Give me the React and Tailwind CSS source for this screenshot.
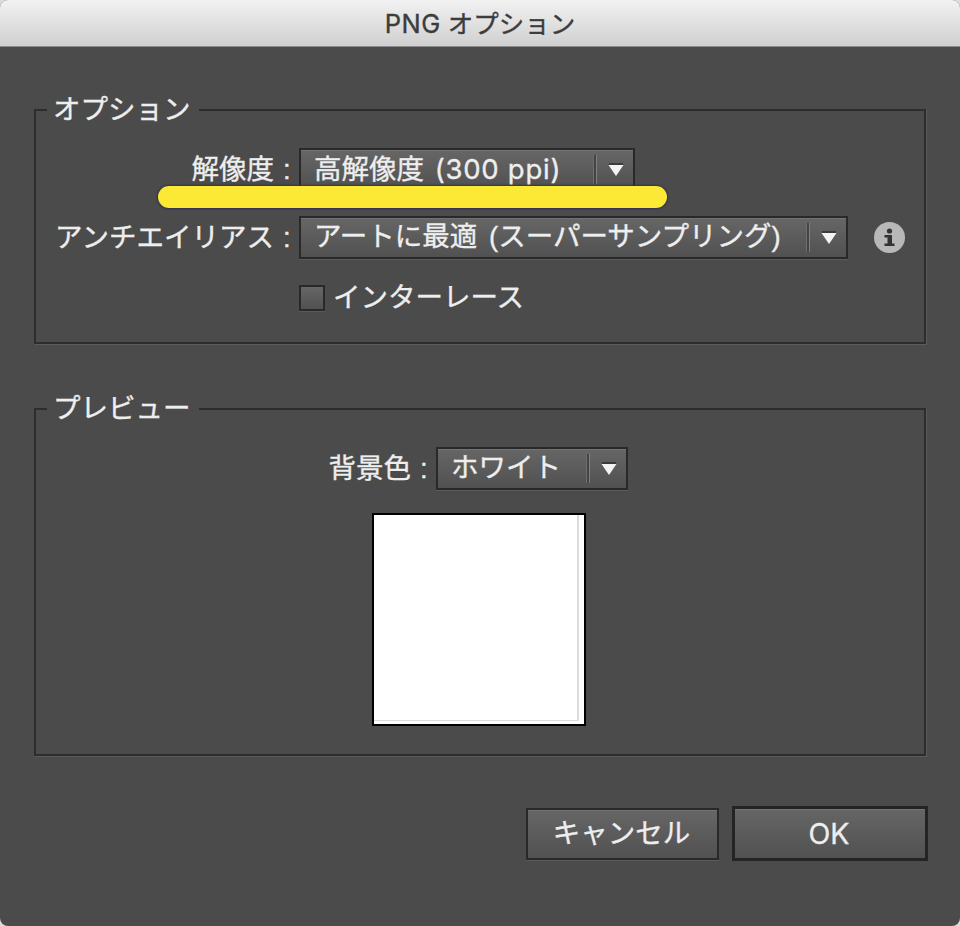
const controlFill = 'bg-linear-to-b from-[#666666] to-[#515151]'

function Group({ title, className, children }) {
  return (
    <fieldset
      className={`mx-[34px] min-w-0 border-2 border-[#2d2d2d] pl-[11px] shadow-[1px_1px_0_#5b5b5b] ${className}`}
    >
      <legend className="h-9 pr-[8px] pl-[6px] leading-9 whitespace-nowrap">{title}</legend>
      {children}
    </fieldset>
  )
}

function Label({ children, className }) {
  return (
    <div className={`flex shrink-0 justify-end whitespace-nowrap ${className}`}>
      <span>{children}</span>
      <span className="w-[25px] pl-[9px]">:</span>
    </div>
  )
}

function Select({ children, className }) {
  return (
    <button
      className={`flex h-[43px] shrink-0 items-center border-2 border-[#292929] pl-[13px] text-left whitespace-nowrap shadow-[0_1px_0_#5b5b5b,inset_0_1px_0_#737373] ${controlFill} ${className}`}
    >
      <span className="flex-1 pb-px leading-9">{children}</span>
      <span className="h-[29px] w-[4px] border-x border-l-[#6e6e6e] border-r-[#808080] bg-[#444444]" />
      <svg className="mr-[9px] ml-[11px] h-[13px] w-4" viewBox="0 0 16 13">
        <path d="M1 0h14v2H1z" fill="#3b3b3b" />
        <path d="M0.500 2h15L8 13z" fill="#f3f3f3" />
      </svg>
    </button>
  )
}

export default function App() {
  return (
    <div className="h-[926px] w-[960px] overflow-hidden bg-[#dcdcdc]">
      <main className="flex h-full flex-col overflow-hidden rounded-[8px] bg-[#4b4b4b] font-['Liberation_Sans','Noto_Sans_CJK_JP',sans-serif] text-[27.5px] text-[#eeeeee] [-webkit-text-stroke:0.35px_currentColor]">
        <header className="flex h-[47px] shrink-0 items-center justify-center border-b border-[#8a8a8a] bg-linear-to-b from-[#f2f2f2] to-[#d0d0d0] pt-[2px] text-[25.5px] text-[#3c3c3c]">
          <h1>
            <span className="font-['Inter'] tracking-[0.5px]">PNG</span> オプション
          </h1>
        </header>

        <Group title="オプション" className="mt-[45px] h-[252px]">
          <div className="relative mt-[20px] flex items-center">
            <Label className="w-[252px]">解像度</Label>
            <Select className="w-[336px]">
              高解像度 <span className="ml-[3px] font-['Inter'] tracking-[0.75px]">(300 ppi)</span>
            </Select>
            <div className="absolute top-[38px] left-[111px] h-[22px] w-[509px] rounded-full bg-[#fbe936] shadow-[0_0_2px_1px_#30304e]" />
          </div>
          <div className="mt-[25px] flex items-center">
            <Label className="w-[252px]">アンチエイリアス</Label>
            <Select className="w-[549px]">
              アートに最適 <span className="ml-[4px]">(スーパーサンプリング)</span>
            </Select>
            <svg className="ml-[26px] h-[31px] w-[31px]" viewBox="0 0 31 31">
              <circle cx="15.5" cy="15.5" r="15.5" fill="#b8b8b8" />
              <circle cx="15.5" cy="9" r="2.6" fill="#333" />
              <path d="M10.500 13h7.500v8.500h2.500v2.500H10.500v-2.500H13.500v-6H10.500z" fill="#333" />
            </svg>
          </div>
          <label className="mt-[21px] ml-[252px] flex items-center">
            <span
              className={`h-[26px] w-[26px] border-2 border-[#292929] shadow-[0_1px_0_#5b5b5b] ${controlFill}`}
            />
            <span className="ml-2 leading-9">インターレース</span>
          </label>
        </Group>

        <Group title="プレビュー" className="mt-[47px] h-[365px]">
          <div className="mt-[20px] flex items-center">
            <Label className="w-[389px]">背景色</Label>
            <Select className="w-[192px]">ホワイト</Select>
          </div>
          <div className="mt-[23px] ml-[325px] h-[213px] w-[214px] border-2 border-black bg-white pr-[5px] pb-[3px]">
            <div className="h-full w-full border-r-2 border-b border-[#dcdcdc]" />
          </div>
        </Group>

        <footer className="mt-[50px] mr-8 flex items-center justify-end gap-[13px]">
          <button
            className={`h-[52px] w-[193px] border-2 border-[#292929] pt-px pr-[2px] shadow-[0_1px_0_#5b5b5b,inset_0_1px_0_#737373] ${controlFill}`}
          >
            キャンセル
          </button>
          <button
            className={`h-[55px] w-[196px] border-[3px] border-[#242424] pt-px pr-[2px] font-['Inter'] text-[28.5px] shadow-[inset_0_1px_0_#737373] ${controlFill}`}
          >
            OK
          </button>
        </footer>
      </main>
    </div>
  )
}
